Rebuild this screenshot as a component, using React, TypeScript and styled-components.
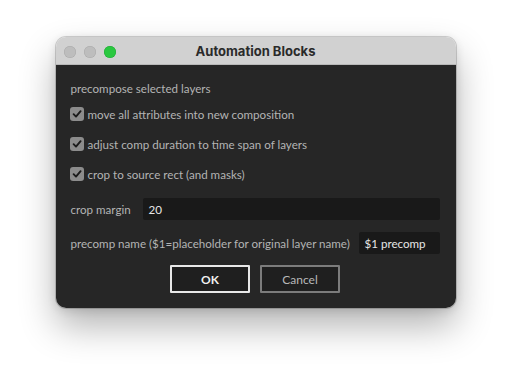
import styled, { createGlobalStyle } from "styled-components";

const GlobalStyle = createGlobalStyle`
  html, body {
    margin: 0;
    background: #ffffff;
  }
`;

const Page = styled.div`
  width: 511px;
  height: 382px;
  display: flex;
  justify-content: center;
  align-items: flex-start;
  padding-top: 37px;
  box-sizing: border-box;
  overflow: hidden;
`;

const Window = styled.div`
  width: 400px;
  height: 271px;
  border-radius: 10px;
  overflow: hidden;
  display: flex;
  flex-direction: column;
  box-shadow: 0 0 0 1px rgba(0, 0, 0, 0.16), 0 18px 36px rgba(0, 0, 0, 0.3),
    0 2px 10px rgba(0, 0, 0, 0.12);
  font-family: Lato, "Open Sans", sans-serif;
`;

const TitleBar = styled.div`
  height: 28px;
  flex-shrink: 0;
  background: #d1d1d1;
  border-bottom: 1px solid #b8b8b8;
  box-sizing: border-box;
  display: flex;
  align-items: center;
  justify-content: center;
  position: relative;
`;

const Lights = styled.div`
  position: absolute;
  left: 8px;
  top: 9px;
  display: flex;
  gap: 8px;
`;

const Light = styled.span<{ $color: string; $edge: string }>`
  width: 12px;
  height: 12px;
  border-radius: 50%;
  background: ${(p) => p.$color};
  box-shadow: inset 0 0 0 0.5px ${(p) => p.$edge};
`;

const Title = styled.div`
  font-family: Inter, Roboto, sans-serif;
  font-weight: 700;
  font-size: 13px;
  color: #2a2a2a;
  margin-top: 1px;
`;

const Body = styled.div`
  flex: 1;
  background: #262626;
  padding: 14px 16px 15px 15px;
  display: flex;
  flex-direction: column;
  color: #b4b4b4;
  font-size: 11.6px;
  white-space: nowrap;
`;

const SectionLabel = styled.div`
  height: 20px;
  line-height: 20px;
`;

const CheckRow = styled.label`
  height: 30px;
  display: flex;
  align-items: center;
  gap: 4px;
  margin-left: -1px;
`;

const Box = styled.span`
  width: 14px;
  height: 14px;
  border-radius: 3px;
  background: #8c8c8c;
  display: flex;
  align-items: center;
  justify-content: center;
`;

const FieldRow = styled.div<{ $mt: number }>`
  height: 22px;
  margin-top: ${(p) => p.$mt}px;
  display: flex;
  align-items: center;
  justify-content: space-between;
  gap: 8px;
`;

const FieldLabel = styled.span`
  flex-shrink: 0;
`;

const Field = styled.div<{ $width?: number }>`
  height: 22px;
  flex: 0 0 ${(p) => p.$width}px;
  background: #191919;
  border-radius: 2px;
  color: #e6e6e6;
  display: flex;
  align-items: center;
  padding-left: 6px;
  box-sizing: border-box;
`;

const Buttons = styled.div`
  margin-top: 11px;
  display: flex;
  justify-content: center;
  gap: 10px;
`;

const Button = styled.button<{ $primary?: boolean }>`
  width: 80px;
  height: 28px;
  background: #1f1f1f;
  border: 2px solid ${(p) => (p.$primary ? "#e8e8e8" : "#7c7c7c")};
  border-radius: 1px;
  color: ${(p) => (p.$primary ? "#f0f0f0" : "#b8b8b8")};
  font-family: Lato, "Open Sans", sans-serif;
  font-size: 12px;
  font-weight: ${(p) => (p.$primary ? 700 : 400)};
  padding: 0;
`;

const Check = () => (
  <Box>
    <svg width="10" height="10" viewBox="0 0 10 10">
      <path d="M1.6 5.2 L4 7.6 L8.6 2.2" fill="none" stroke="#1c1c1c" strokeWidth="1.9" strokeLinecap="round" strokeLinejoin="round" />
    </svg>
  </Box>
);

const options = [
  "move all attributes into new composition",
  "adjust comp duration to time span of layers",
  "crop to source rect (and masks)",
];

export default function App() {
  return (
    <>
      <GlobalStyle />
      <Page>
        <Window>
          <TitleBar>
            <Lights>
              <Light $color="#bdbdbd" $edge="#a9a9a9" />
              <Light $color="#bdbdbd" $edge="#a9a9a9" />
              <Light $color="#2ac840" $edge="#1fa834" />
            </Lights>
            <Title>Automation Blocks</Title>
          </TitleBar>
          <Body>
            <SectionLabel>precompose selected layers</SectionLabel>
            {options.map((o) => (
              <CheckRow key={o}>
                <Check />
                {o}
              </CheckRow>
            ))}
            <FieldRow $mt={9}>
              <FieldLabel>crop margin</FieldLabel>
              <Field $width={297}>20</Field>
            </FieldRow>
            <FieldRow $mt={12}>
              <FieldLabel>precomp name ($1=placeholder for original layer name)</FieldLabel>
              <Field $width={81}>$1 precomp</Field>
            </FieldRow>
            <Buttons>
              <Button $primary>OK</Button>
              <Button>Cancel</Button>
            </Buttons>
          </Body>
        </Window>
      </Page>
    </>
  );
}
